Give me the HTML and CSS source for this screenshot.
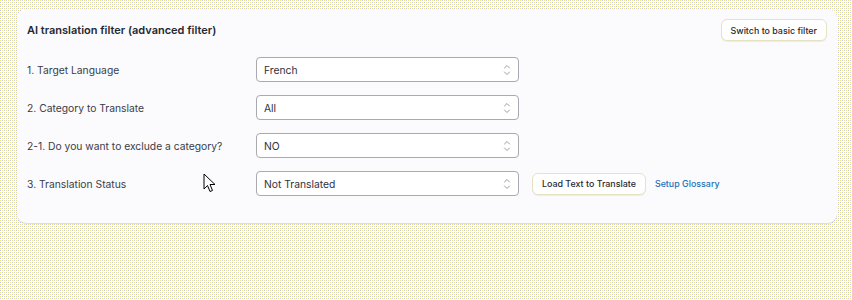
FILE: index.html
```html
<!DOCTYPE html>
<html lang="en">
<head>
<meta charset="utf-8">
<title>AI translation filter</title>
<link rel="stylesheet" href="styles.css">
</head>
<body>
<div class="card">
  <div class="header">
    <h2 class="title">AI translation filter (advanced filter)</h2>
    <button class="btn">Switch to basic filter</button>
  </div>
  <div class="rows">
    <div class="row">
      <label class="label">1. Target Language</label>
      <div class="select"><span>French</span><svg class="chev" viewBox="0 0 10 16" width="10" height="16"><path d="M2.5 6 L5 3.5 L7.5 6 M2.5 10 L5 12.5 L7.5 10" fill="none" stroke="#9a9aa4" stroke-width="1" stroke-linecap="round" stroke-linejoin="round"/></svg></div>
    </div>
    <div class="row">
      <label class="label">2. Category to Translate</label>
      <div class="select"><span>All</span><svg class="chev" viewBox="0 0 10 16" width="10" height="16"><path d="M2.5 6 L5 3.5 L7.5 6 M2.5 10 L5 12.5 L7.5 10" fill="none" stroke="#9a9aa4" stroke-width="1" stroke-linecap="round" stroke-linejoin="round"/></svg></div>
    </div>
    <div class="row">
      <label class="label">2-1. Do you want to exclude a category?</label>
      <div class="select"><span>NO</span><svg class="chev" viewBox="0 0 10 16" width="10" height="16"><path d="M2.5 6 L5 3.5 L7.5 6 M2.5 10 L5 12.5 L7.5 10" fill="none" stroke="#9a9aa4" stroke-width="1" stroke-linecap="round" stroke-linejoin="round"/></svg></div>
    </div>
    <div class="row">
      <label class="label">3. Translation Status</label>
      <div class="select"><span>Not Translated</span><svg class="chev" viewBox="0 0 10 16" width="10" height="16"><path d="M2.5 6 L5 3.5 L7.5 6 M2.5 10 L5 12.5 L7.5 10" fill="none" stroke="#9a9aa4" stroke-width="1" stroke-linecap="round" stroke-linejoin="round"/></svg></div>
      <button class="btn load">Load Text to Translate</button>
      <a class="link" href="#">Setup Glossary</a>
    </div>
  </div>
</div>
<svg class="cursor" viewBox="0 0 14 22" width="14" height="22"><path d="M1 1 L1 16 L4.5 12.5 L7 18.5 L9.5 17.5 L7 11.5 L12 11.5 Z" fill="#fff" stroke="#000" stroke-width="1" stroke-linejoin="miter"/></svg>
</body>
</html>
```
FILE: styles.css
```css
html, body {
  margin: 0;
  padding: 0;
}
body {
  width: 852px;
  height: 300px;
  overflow: hidden;
  position: relative;
  font-family: Inter, "Noto Sans", sans-serif;
  font-size: 10.3px;
  color: #3a3b47;
  background-color: #ffffff;
  background-image:
    conic-gradient(from 270deg at 1px 1px, #ebe67c 25%, transparent 0),
    conic-gradient(from 270deg at 1px 1px, #ebe67c 25%, transparent 0),
    conic-gradient(from 270deg at 1px 1px, #c8c7f0 25%, transparent 0),
    conic-gradient(from 270deg at 1px 1px, #c8c7f0 25%, transparent 0);
  background-size: 4px 4px;
  background-position: 0 0, 2px 2px, 2px 0, 0 2px;
  padding: 9px 15px 0 17px;
  box-sizing: border-box;
}
.card {
  width: 820px;
  height: 214px;
  box-sizing: border-box;
  background: #fbfbfd;
  border-radius: 9px;
  box-shadow: 0 1px 1px rgba(150, 150, 180, 0.35);
  padding: 10px 10px 0 10px;
}
.header {
  display: flex;
  align-items: center;
  justify-content: space-between;
  height: 22px;
}
.title {
  margin: 0;
  font-size: 11px;
  font-weight: 600;
  color: #26272f;
}
.btn {
  font-family: inherit;
  font-size: 8.9px;
  font-weight: 500;
  color: #26272f;
  background: #ffffff;
  border: 1px solid #e6e3c2;
  border-radius: 6px;
  height: 22px;
  padding: 0 9px;
  box-shadow: 0 1px 0 rgba(0,0,0,0.06);
}
.rows {
  margin-top: 16px;
  display: flex;
  flex-direction: column;
  gap: 13px;
}
.row {
  display: flex;
  align-items: center;
  height: 25px;
}
.label {
  width: 229px;
  flex: none;
}
.select {
  width: 263px;
  height: 25px;
  box-sizing: border-box;
  border: 1px solid #a9a9b0;
  border-radius: 4px;
  background: #fff;
  display: flex;
  align-items: center;
  justify-content: space-between;
  padding: 0 6px 0 7px;
  color: #30313c;
}
.chev {
  display: block;
}
.load {
  margin-left: 13px;
  padding: 0 9px;
}
.link {
  margin-left: 9px;
  font-size: 8.9px;
  color: #1d6fb8;
  text-decoration: none;
  font-weight: 500;
}
.cursor {
  position: absolute;
  left: 203px;
  top: 173px;
}
```
